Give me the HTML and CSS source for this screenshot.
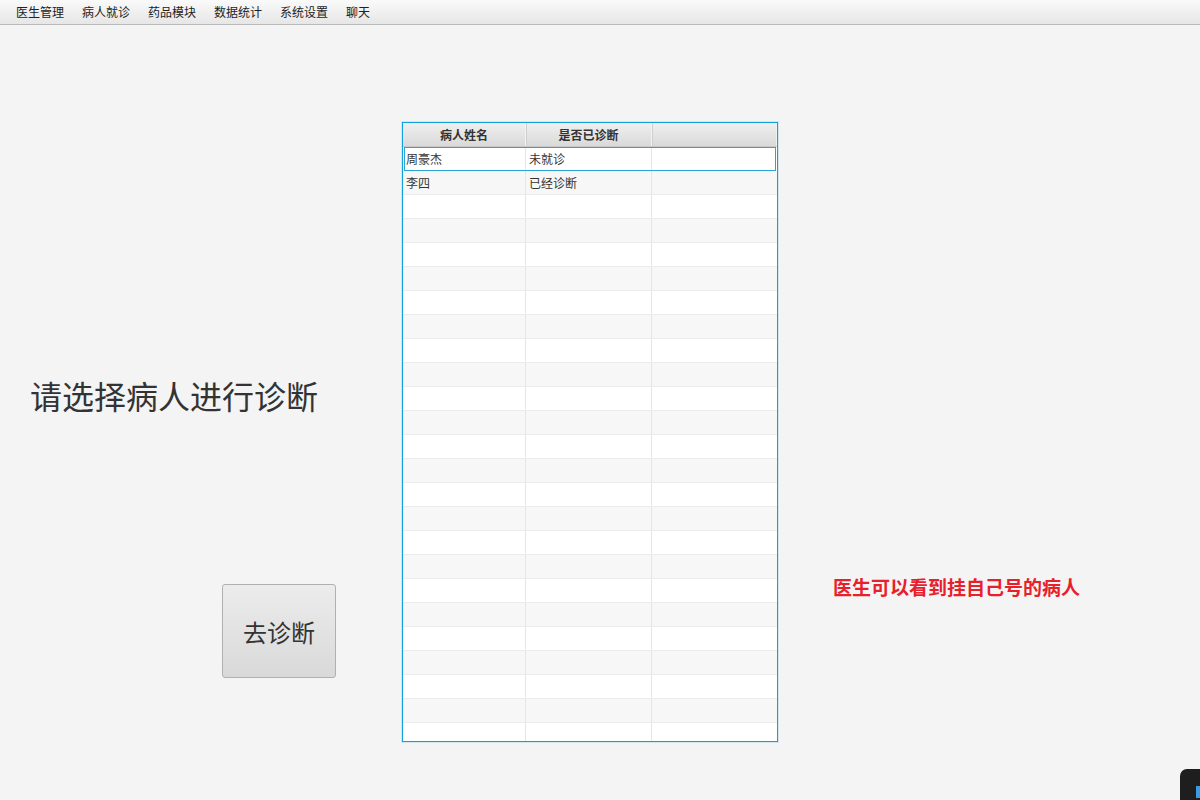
FILE: index.html
```html
<!DOCTYPE html>
<html lang="zh">
<head>
<meta charset="utf-8">
<title>病人就诊</title>
<link rel="stylesheet" href="styles.css">
</head>
<body>
<nav class="menubar">
  <span class="menu-item">医生管理</span>
  <span class="menu-item">病人就诊</span>
  <span class="menu-item">药品模块</span>
  <span class="menu-item">数据统计</span>
  <span class="menu-item">系统设置</span>
  <span class="menu-item">聊天</span>
</nav>
<main class="main">
  <section class="left-panel">
    <h1 class="prompt">请选择病人进行诊断</h1>
    <button class="go-btn">去诊断</button>
  </section>
  <section class="table">
    <div class="row head">
      <div class="cell">病人姓名</div>
      <div class="cell">是否已诊断</div>
      <div class="cell"></div>
    </div>
    <div class="row selected"><div class="cell">周豪杰</div><div class="cell">未就诊</div><div class="cell"></div></div>
    <div class="row odd"><div class="cell">李四</div><div class="cell">已经诊断</div><div class="cell"></div></div>
    <div class="row"><div class="cell"></div><div class="cell"></div><div class="cell"></div></div>
    <div class="row odd"><div class="cell"></div><div class="cell"></div><div class="cell"></div></div>
    <div class="row"><div class="cell"></div><div class="cell"></div><div class="cell"></div></div>
    <div class="row odd"><div class="cell"></div><div class="cell"></div><div class="cell"></div></div>
    <div class="row"><div class="cell"></div><div class="cell"></div><div class="cell"></div></div>
    <div class="row odd"><div class="cell"></div><div class="cell"></div><div class="cell"></div></div>
    <div class="row"><div class="cell"></div><div class="cell"></div><div class="cell"></div></div>
    <div class="row odd"><div class="cell"></div><div class="cell"></div><div class="cell"></div></div>
    <div class="row"><div class="cell"></div><div class="cell"></div><div class="cell"></div></div>
    <div class="row odd"><div class="cell"></div><div class="cell"></div><div class="cell"></div></div>
    <div class="row"><div class="cell"></div><div class="cell"></div><div class="cell"></div></div>
    <div class="row odd"><div class="cell"></div><div class="cell"></div><div class="cell"></div></div>
    <div class="row"><div class="cell"></div><div class="cell"></div><div class="cell"></div></div>
    <div class="row odd"><div class="cell"></div><div class="cell"></div><div class="cell"></div></div>
    <div class="row"><div class="cell"></div><div class="cell"></div><div class="cell"></div></div>
    <div class="row odd"><div class="cell"></div><div class="cell"></div><div class="cell"></div></div>
    <div class="row"><div class="cell"></div><div class="cell"></div><div class="cell"></div></div>
    <div class="row odd"><div class="cell"></div><div class="cell"></div><div class="cell"></div></div>
    <div class="row"><div class="cell"></div><div class="cell"></div><div class="cell"></div></div>
    <div class="row odd"><div class="cell"></div><div class="cell"></div><div class="cell"></div></div>
    <div class="row"><div class="cell"></div><div class="cell"></div><div class="cell"></div></div>
    <div class="row odd"><div class="cell"></div><div class="cell"></div><div class="cell"></div></div>
    <div class="row"><div class="cell"></div><div class="cell"></div><div class="cell"></div></div>
  </section>
  <section class="right-panel">
    <p class="note">医生可以看到挂自己号的病人</p>
  </section>
</main>
<div class="corner-app"><span class="corner-icon"></span></div>
</body>
</html>
```

FILE: styles.css
```css
html, body {
  margin: 0;
  padding: 0;
  width: 1200px;
  height: 800px;
  overflow: hidden;
  background: #f4f4f4;
  font-family: "Microsoft YaHei", "Noto Sans CJK SC", "Noto Sans", sans-serif;
  color: #333;
  position: relative;
}

.menubar {
  height: 24px;
  border-bottom: 1px solid #b9b9b9;
  background: linear-gradient(#fafafa, #e6e6e6);
  display: flex;
  padding-left: 7px;
  box-sizing: content-box;
}

.menu-item {
  font-size: 12px;
  line-height: 24px;
  padding: 0 9px;
  color: #222;
}

.main {
  display: flex;
  align-items: flex-start;
}

.left-panel {
  width: 402px;
  display: flex;
  flex-direction: column;
  align-items: flex-start;
  padding-top: 350px;
}

.prompt {
  margin: 0 0 0 30px;
  font-size: 32px;
  font-weight: normal;
  line-height: 40px;
  color: #333;
}

.go-btn {
  margin: 169px 0 0 222px;
  width: 114px;
  height: 94px;
  border: 1px solid #b0b0b0;
  border-radius: 3px;
  background: linear-gradient(#ececec, #d9d9d9);
  font-family: inherit;
  font-size: 24px;
  color: #333;
  padding: 0;
}

.table {
  margin-top: 97px;
  width: 376px;
  height: 620px;
  box-sizing: border-box;
  border: 1px solid #0fa2dc;
  box-shadow: 0 0 0 1px rgba(15, 162, 220, 0.15);
  background: #fff;
  overflow: hidden;
  display: flex;
  flex-direction: column;
}

.row {
  display: grid;
  grid-template-columns: 123px 126px 1fr;
  height: 24px;
  flex: none;
  box-sizing: border-box;
  border-bottom: 1px solid #ececec;
  background: #fff;
  font-size: 12px;
  line-height: 23px;
}

.row.odd {
  background: #f7f7f7;
}

.cell {
  border-right: 1px solid #e6e6e6;
  padding-left: 3px;
  white-space: nowrap;
  overflow: hidden;
}

.cell:last-child {
  border-right: none;
}

.row.head {
  background: linear-gradient(#f0f0f0, #d9d9d9);
  border-bottom: 1px solid #c9c9c9;
  font-weight: bold;
  color: #333;
}

.row.head .cell {
  text-align: center;
  padding-left: 0;
  border-right: 1px solid #f2f2f2;
  box-shadow: 1px 0 0 #cfcfcf;
}

.row.selected {
  margin: 0 1px;
  border: 1px solid #2aa4d5;
  grid-template-columns: 121px 126px 1fr;
  line-height: 22px;
}

.row.selected .cell:first-child {
  padding-left: 1px;
}

.right-panel {
  padding-top: 550px;
  padding-left: 55px;
}

.note {
  margin: 0;
  font-size: 19px;
  line-height: 24px;
  font-weight: bold;
  color: #e8202c;
}

.corner-app {
  position: absolute;
  left: 1180px;
  top: 769px;
  width: 40px;
  height: 40px;
  background: #1e1e1e;
  border-radius: 7px;
}

.corner-icon {
  position: absolute;
  left: 16px;
  top: 17px;
  width: 10px;
  height: 12px;
  background: #3d9ae0;
}
```
